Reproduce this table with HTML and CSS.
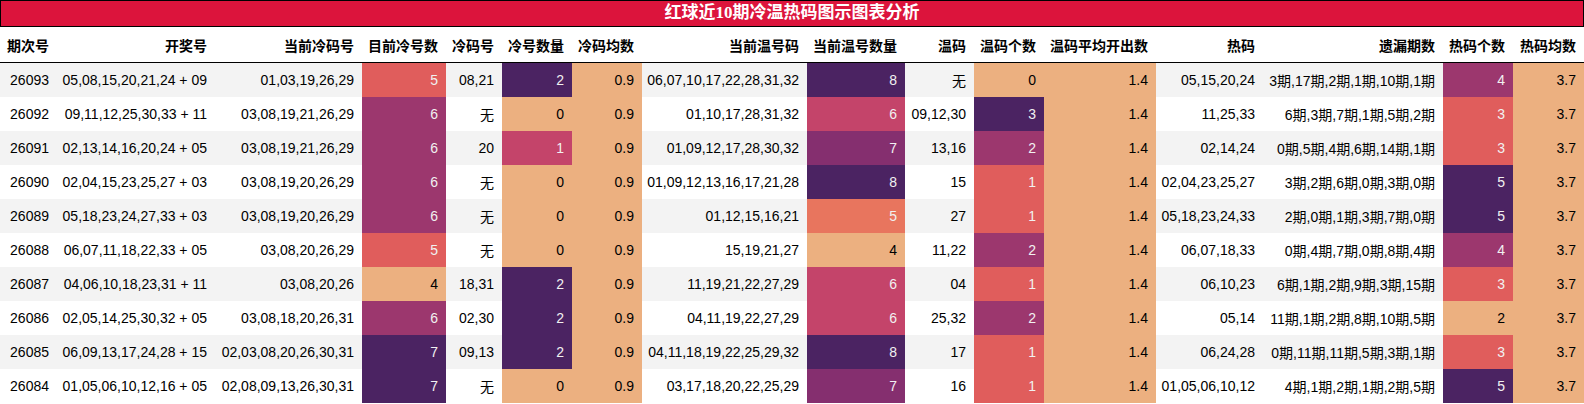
FILE: index.html
```html
<!DOCTYPE html>
<html lang="zh">
<head>
<meta charset="utf-8">
<title>红球近10期冷温热码图示图表分析</title>
<link rel="stylesheet" href="styles.css">
</head>
<body>
<div class="title">红球近10期冷温热码图示图表分析</div>
<table class="grid">
<colgroup>
<col class="w57"><col class="w158"><col class="w147"><col class="w84"><col class="w56"><col class="w70"><col class="w70"><col class="w165"><col class="w98"><col class="w69"><col class="w70"><col class="w112"><col class="w107"><col class="w180"><col class="w70"><col class="w71">
</colgroup>
<thead>
<tr><th>期次号</th><th>开奖号</th><th>当前冷码号</th><th>目前冷号数</th><th>冷码号</th><th>冷号数量</th><th>冷码均数</th><th>当前温号码</th><th>当前温号数量</th><th>温码</th><th>温码个数</th><th>温码平均开出数</th><th>热码</th><th>遗漏期数</th><th>热码个数</th><th>热码均数</th></tr>
</thead>
<tbody>
<tr><td>26093</td><td>05,08,15,20,21,24 + 09</td><td>01,03,19,26,29</td><td class="g33">5</td><td>08,21</td><td class="g100">2</td><td class="g0">0.9</td><td>06,07,10,17,22,28,31,32</td><td class="g100">8</td><td>无</td><td class="g0">0</td><td class="g0">1.4</td><td>05,15,20,24</td><td>3期,17期,2期,1期,10期,1期</td><td class="g67">4</td><td class="g0">3.7</td></tr>
<tr><td>26092</td><td>09,11,12,25,30,33 + 11</td><td>03,08,19,21,26,29</td><td class="g67">6</td><td>无</td><td class="g0">0</td><td class="g0">0.9</td><td>01,10,17,28,31,32</td><td class="g50">6</td><td>09,12,30</td><td class="g100">3</td><td class="g0">1.4</td><td>11,25,33</td><td>6期,3期,7期,1期,5期,2期</td><td class="g33">3</td><td class="g0">3.7</td></tr>
<tr><td>26091</td><td>02,13,14,16,20,24 + 05</td><td>03,08,19,21,26,29</td><td class="g67">6</td><td>20</td><td class="g50">1</td><td class="g0">0.9</td><td>01,09,12,17,28,30,32</td><td class="g75">7</td><td>13,16</td><td class="g67">2</td><td class="g0">1.4</td><td>02,14,24</td><td>0期,5期,4期,6期,14期,1期</td><td class="g33">3</td><td class="g0">3.7</td></tr>
<tr><td>26090</td><td>02,04,15,23,25,27 + 03</td><td>03,08,19,20,26,29</td><td class="g67">6</td><td>无</td><td class="g0">0</td><td class="g0">0.9</td><td>01,09,12,13,16,17,21,28</td><td class="g100">8</td><td>15</td><td class="g33">1</td><td class="g0">1.4</td><td>02,04,23,25,27</td><td>3期,2期,6期,0期,3期,0期</td><td class="g100">5</td><td class="g0">3.7</td></tr>
<tr><td>26089</td><td>05,18,23,24,27,33 + 03</td><td>03,08,19,20,26,29</td><td class="g67">6</td><td>无</td><td class="g0">0</td><td class="g0">0.9</td><td>01,12,15,16,21</td><td class="g25">5</td><td>27</td><td class="g33">1</td><td class="g0">1.4</td><td>05,18,23,24,33</td><td>2期,0期,1期,3期,7期,0期</td><td class="g100">5</td><td class="g0">3.7</td></tr>
<tr><td>26088</td><td>06,07,11,18,22,33 + 05</td><td>03,08,20,26,29</td><td class="g33">5</td><td>无</td><td class="g0">0</td><td class="g0">0.9</td><td>15,19,21,27</td><td class="g0">4</td><td>11,22</td><td class="g67">2</td><td class="g0">1.4</td><td>06,07,18,33</td><td>0期,4期,7期,0期,8期,4期</td><td class="g67">4</td><td class="g0">3.7</td></tr>
<tr><td>26087</td><td>04,06,10,18,23,31 + 11</td><td>03,08,20,26</td><td class="g0">4</td><td>18,31</td><td class="g100">2</td><td class="g0">0.9</td><td>11,19,21,22,27,29</td><td class="g50">6</td><td>04</td><td class="g33">1</td><td class="g0">1.4</td><td>06,10,23</td><td>6期,1期,2期,9期,3期,15期</td><td class="g33">3</td><td class="g0">3.7</td></tr>
<tr><td>26086</td><td>02,05,14,25,30,32 + 05</td><td>03,08,18,20,26,31</td><td class="g67">6</td><td>02,30</td><td class="g100">2</td><td class="g0">0.9</td><td>04,11,19,22,27,29</td><td class="g50">6</td><td>25,32</td><td class="g67">2</td><td class="g0">1.4</td><td>05,14</td><td>11期,1期,2期,8期,10期,5期</td><td class="g0">2</td><td class="g0">3.7</td></tr>
<tr><td>26085</td><td>06,09,13,17,24,28 + 15</td><td>02,03,08,20,26,30,31</td><td class="g100">7</td><td>09,13</td><td class="g100">2</td><td class="g0">0.9</td><td>04,11,18,19,22,25,29,32</td><td class="g100">8</td><td>17</td><td class="g33">1</td><td class="g0">1.4</td><td>06,24,28</td><td>0期,11期,11期,5期,3期,1期</td><td class="g33">3</td><td class="g0">3.7</td></tr>
<tr><td>26084</td><td>01,05,06,10,12,16 + 05</td><td>02,08,09,13,26,30,31</td><td class="g100">7</td><td>无</td><td class="g0">0</td><td class="g0">0.9</td><td>03,17,18,20,22,25,29</td><td class="g75">7</td><td>16</td><td class="g33">1</td><td class="g0">1.4</td><td>01,05,06,10,12</td><td>4期,1期,2期,1期,2期,5期</td><td class="g100">5</td><td class="g0">3.7</td></tr>
</tbody>
</table>
</body>
</html>
```

FILE: styles.css
```css
html, body {
  margin: 0;
  padding: 0;
  background: #ffffff;
}

body {
  width: 1584px;
  font-family: "Liberation Sans", "Noto Sans CJK SC", sans-serif;
  font-size: 14px;
  color: #000000;
}

.title {
  box-sizing: border-box;
  height: 27px;
  border: 1px solid #000000;
  background: #dc143c;
  color: #ffffff;
  font-family: "Liberation Serif", "Noto Sans CJK SC", serif;
  font-weight: bold;
  font-size: 17px;
  line-height: 24px;
  text-align: center;
}

.grid {
  width: 1584px;
  table-layout: fixed;
  border-collapse: collapse;
  border-spacing: 0;
}

.w57 { width: 57px; }
.w158 { width: 158px; }
.w147 { width: 147px; }
.w84 { width: 84px; }
.w56 { width: 56px; }
.w70 { width: 70px; }
.w165 { width: 165px; }
.w98 { width: 98px; }
.w69 { width: 69px; }
.w112 { width: 112px; }
.w107 { width: 107px; }
.w180 { width: 180px; }
.w71 { width: 71px; }

.grid th,
.grid td {
  padding: 0 8px 0 4px;
  text-align: right;
  white-space: nowrap;
  vertical-align: middle;
  overflow: hidden;
}

.grid th {
  height: 35px;
  font-weight: bold;
  border-bottom: 1px solid #000000;
}

.grid td {
  height: 34px;
}

.grid tbody tr:nth-child(odd) {
  background: #f3f3f3;
}

.grid tbody tr:nth-child(even) {
  background: #ffffff;
}

.g0 { background: #ecb080; color: #000000; }
.g25 { background: #e8755e; color: #f1f1f1; }
.g33 { background: #e05d5c; color: #f1f1f1; }
.g50 { background: #c4446a; color: #f1f1f1; }
.g67 { background: #9c376e; color: #f1f1f1; }
.g75 { background: #852f6f; color: #f1f1f1; }
.g100 { background: #4b2362; color: #f1f1f1; }
```
